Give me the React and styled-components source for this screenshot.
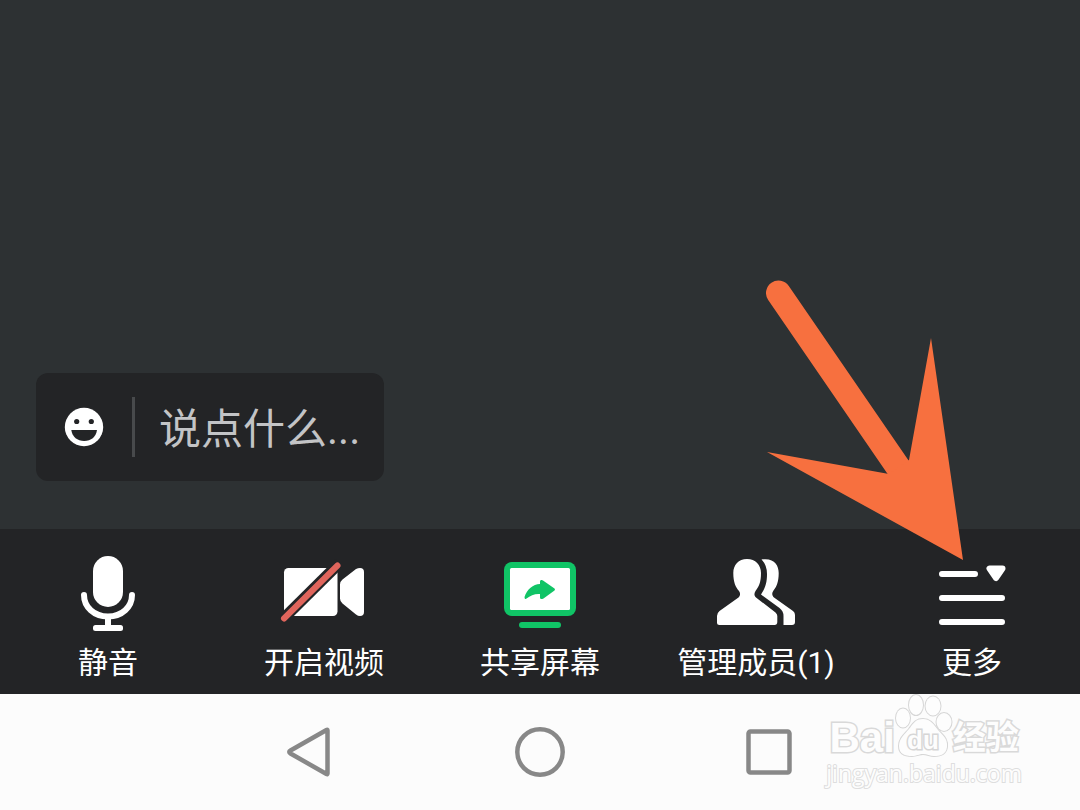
import React, { useState } from "react";
import styled, { createGlobalStyle } from "styled-components";

const GlobalStyle = createGlobalStyle`
  * {
    box-sizing: border-box;
  }
  body {
    margin: 0;
    background-color: #2d3133;
    font-family: Roboto, "Noto Sans CJK SC", sans-serif;
  }
`;

const MicIcon = () => (
  <ToolSvg viewBox="0 0 96 84" aria-hidden="true">
    <rect x="33" y="5" width="30" height="51" rx="15" fill="#fff" />
    <path
      d="M24 44C24 56 34 65.500 48 65.500S72 56 72 44"
      fill="none"
      stroke="#fff"
      strokeWidth="6"
      strokeLinecap="round"
    />
    <rect x="45" y="65" width="6" height="11" fill="#fff" />
    <rect x="33" y="74" width="30" height="6" rx="2.500" fill="#fff" />
  </ToolSvg>
);

const VideoOffIcon = () => (
  <ToolSvg viewBox="0 0 96 84" aria-hidden="true">
    <rect x="8" y="17" width="53.500" height="48" rx="4.500" fill="#fff" />
    <path
      d="M64 33.500Q64 30.500 66.500 28.500L80 18Q82 17 84 17Q88 17 88 21V61Q88 65 84 65Q82 65 80 63.500L66.500 52.500Q64 50.500 64 47.500Z"
      fill="#fff"
    />
    <path d="M6 69L63.500 12" stroke="#232426" strokeWidth="11" />
    <path
      d="M8 67.500L61.500 14.500"
      stroke="#e0655c"
      strokeWidth="6"
      strokeLinecap="round"
    />
  </ToolSvg>
);

const ShareIcon = () => (
  <ToolSvg viewBox="0 0 96 84" aria-hidden="true">
    <rect x="12" y="11" width="72" height="54" rx="8" fill="#10c466" />
    <rect x="18" y="17" width="60" height="42" rx="1.500" fill="#fff" />
    <path
      d="M32.500 46C35 38 41 33.500 48 33V30.500Q48 28.500 49.800 29L51 29.500L62.500 37.500Q63.500 38.500 62.500 39.500L51.500 47.500Q48 49 48 46.500V43C43 42.500 38.500 44.500 34.500 47.500Q32.500 49 32.500 46Z"
      fill="#10c466"
    />
    <rect x="27" y="71" width="42" height="6" rx="3" fill="#10c466" />
  </ToolSvg>
);

const MembersIcon = () => (
  <ToolSvg viewBox="0 0 96 84" aria-hidden="true">
    <path
      d="M39 8C30.500 8 25.300 14 25.300 22C25.300 31 27.500 36 31 40C32.500 42 32.500 44.500 30.500 46.500L11.500 60Q9 62 9 65V71.500Q9 74 11.500 74H66.500Q69.300 74 69.300 71V65Q69.300 63 67.500 61.500L48 46.500C46 44.500 46 42.500 47.500 40C51 35.500 53 31 53 22C53 14 47.500 8 39 8Z"
      fill="#fff"
    />
    <path
      d="M53.500 8.500C66 6.500 70.700 14 70.700 22C70.700 31 68.500 36 65.500 39.500C63.500 42 64 44.500 66 46.500L85 60Q87 61.500 87 64V71Q87 74 84 74H75.500V65Q75.500 60 71.500 57L53 43.500C57.500 37 59 31 59 23Q59 14 53.500 8.500Z"
      fill="#fff"
    />
  </ToolSvg>
);

const MoreIcon = () => (
  <ToolSvg viewBox="0 0 96 84" aria-hidden="true">
    <path
      d="M18 23H51M18 47H78M18 71H78"
      stroke="#fff"
      strokeWidth="6"
      strokeLinecap="round"
    />
    <path
      d="M65.500 17.500H78.500L72 27Z"
      fill="#fff"
      stroke="#fff"
      strokeWidth="6"
      strokeLinejoin="round"
    />
  </ToolSvg>
);

const SmileIcon = () => (
  <svg width="40" height="40" viewBox="0 0 40 40" aria-hidden="true">
    <circle cx="20" cy="20" r="19.200" fill="#fff" />
    <circle cx="12.700" cy="14.500" r="2.600" fill="#232426" />
    <circle cx="27.300" cy="14.500" r="2.600" fill="#232426" />
    <path d="M7.300 23H33C32 30 27 34 20.200 34S8.300 30 7.300 23Z" fill="#232426" />
  </svg>
);

const Pointer = () => (
  <PointerSvg viewBox="0 0 198 280" aria-hidden="true">
    <path
      d="M12.500 13L134 190"
      stroke="#f7703f"
      strokeWidth="25"
      strokeLinecap="round"
    />
    <path d="M165 58L197 280L1 172L123 194L143 180Z" fill="#f7703f" />
  </PointerSvg>
);

const PawLogo = () => (
  <PawSvg viewBox="0 0 58 64" aria-hidden="true">
    <g fill="#fdfdfd" stroke="#d6d6d6" strokeWidth="2">
      <ellipse cx="21" cy="11" rx="7" ry="10" />
      <ellipse cx="38" cy="12" rx="7.500" ry="9.500" />
      <ellipse cx="8" cy="24" rx="7" ry="9.500" />
      <ellipse cx="49" cy="28" rx="7.500" ry="9" />
      <path d="M28 25C36 25 39 31 43 36S53 44 52 53C51 61 45 62 39 62C35 62 32 60 28 60S22 62 17 62C10 62 4 60 4 52C4 44 10 40 14 35S20 25 28 25Z" />
    </g>
    <PawText x="28" y="55" textAnchor="middle">
      du
    </PawText>
  </PawSvg>
);

const tools = [
  { id: "mute", label: "静音", Icon: MicIcon },
  { id: "video", label: "开启视频", Icon: VideoOffIcon },
  { id: "share", label: "共享屏幕", Icon: ShareIcon },
  { id: "members", label: "管理成员(1)", Icon: MembersIcon },
  { id: "more", label: "更多", Icon: MoreIcon, pointed: true },
];

const App = () => {
  const [message, setmessage] = useState("");

  return (
    <Screen>
      <GlobalStyle />
      <Stage>
        <ChatBox>
          <EmojiButton type="button" aria-label="表情">
            <SmileIcon />
          </EmojiButton>
          <Divider />
          <ChatInput
            type="text"
            aria-label="说点什么"
            placeholder="说点什么..."
            value={message}
            onChange={(e) => setmessage(e.target.value)}
          />
        </ChatBox>
      </Stage>

      <Toolbar>
        {tools.map(({ id, label, Icon, pointed }) => (
          <ToolItem key={id}>
            <ToolButton type="button">
              <Icon />
              <span>{label}</span>
            </ToolButton>
            {pointed && <Pointer />}
          </ToolItem>
        ))}
      </Toolbar>

      <NavBar>
        <NavButton type="button" aria-label="返回">
          <svg width="52" height="52" viewBox="0 0 52 52">
            <path
              d="M43.500 4.500V47.500Q43.500 48.500 42.500 48L6.500 27.500Q4 26 6.500 24.500L42.500 4Q43.500 3.500 43.500 4.500Z"
              fill="none"
              stroke="#888"
              strokeWidth="4.500"
              strokeLinejoin="round"
            />
          </svg>
        </NavButton>
        <NavButton type="button" aria-label="主页">
          <svg width="52" height="52" viewBox="0 0 52 52">
            <circle
              cx="26"
              cy="26"
              r="22.700"
              fill="none"
              stroke="#888"
              strokeWidth="4.500"
            />
          </svg>
        </NavButton>
        <NavButton type="button" aria-label="最近任务">
          <svg width="52" height="52" viewBox="0 0 52 52">
            <rect
              x="4.500"
              y="5.500"
              width="41"
              height="41"
              rx="2"
              fill="none"
              stroke="#888"
              strokeWidth="4.500"
            />
          </svg>
        </NavButton>
        <Watermark>
          <Brand>
            <BrandText>Bai</BrandText>
            <PawLogo />
            <BrandText $cjk>经验</BrandText>
          </Brand>
          <Site>jingyan.baidu.com</Site>
        </Watermark>
      </NavBar>
    </Screen>
  );
};

export default App;

const Screen = styled.div`
  min-height: 100vh;
  display: flex;
  flex-direction: column;
  overflow: hidden;
`;

const Stage = styled.main`
  flex: 1;
  display: flex;
  align-items: flex-end;
  padding: 36px 36px 48px;
`;

const ChatBox = styled.div`
  display: flex;
  align-items: center;
  height: 108px;
  padding: 0 24px;
  border-radius: 12px;
  background-color: #232426;
`;

const EmojiButton = styled.button`
  display: flex;
  padding: 0 4px;
  border: none;
  background: none;
  cursor: pointer;
`;

const Divider = styled.span`
  width: 3px;
  height: 60px;
  margin: 0 24px;
  background-color: #484a4c;
`;

const ChatInput = styled.input`
  width: 201px;
  height: 60px;
  padding: 4px 0 0;
  border: none;
  outline: none;
  background: none;
  color: #fff;
  font-family: inherit;
  font-size: 42px;

  &::placeholder {
    color: #c3c4c6;
    opacity: 1;
  }
`;

const Toolbar = styled.ul`
  display: grid;
  grid-template-columns: repeat(5, 1fr);
  margin: 0;
  padding: 0;
  list-style: none;
  background-color: #232426;
`;

const ToolItem = styled.li`
  position: relative;
`;

const ToolButton = styled.button`
  width: 100%;
  display: flex;
  flex-direction: column;
  align-items: center;
  gap: 9px;
  padding: 22px 0 12px;
  border: none;
  background: none;
  color: #fff;
  font-family: inherit;
  font-size: 30px;
  line-height: 38px;
  white-space: nowrap;
  cursor: pointer;
`;

const ToolSvg = styled.svg`
  width: 96px;
  height: 84px;
`;

/* the tip sits just above the last tool's icon */
const PointerSvg = styled.svg`
  position: absolute;
  right: calc(50% + 8px);
  bottom: 134px;
  width: 198px;
  height: 280px;
  pointer-events: none;
`;

const NavBar = styled.nav`
  position: relative;
  display: grid;
  grid-template-columns: repeat(3, 1fr);
  height: 116px;
  padding: 0 18%;
  background-color: #fcfcfc;
`;

const NavButton = styled.button`
  display: flex;
  align-items: center;
  justify-content: center;
  padding: 0;
  border: none;
  background: none;
  cursor: pointer;
`;

const Watermark = styled.div`
  position: absolute;
  top: 0;
  right: 58px;
  display: flex;
  flex-direction: column;
  color: #fdfdfd;
  paint-order: stroke fill;
  pointer-events: none;
`;

const Brand = styled.div`
  display: flex;
  align-items: flex-end;
  justify-content: center;
  height: 64px;
`;

const BrandText = styled.span`
  font-family: "Liberation Sans", "Noto Sans CJK SC", sans-serif;
  font-size: ${(props) => (props.$cjk ? "33px" : "42px")};
  font-weight: bold;
  line-height: 40px;
  -webkit-text-stroke: 3px #d9d9d9;
`;

const PawSvg = styled.svg`
  width: 58px;
  height: 64px;
`;

const PawText = styled.text`
  fill: #fdfdfd;
  stroke: #d6d6d6;
  stroke-width: 3px;
  paint-order: stroke fill;
  font-family: "Liberation Sans", sans-serif;
  font-size: 26px;
  font-weight: bold;
`;

const Site = styled.span`
  font-family: "Open Sans", sans-serif;
  font-size: 23px;
  line-height: 30px;
  -webkit-text-stroke: 2px #dedede;
`;
